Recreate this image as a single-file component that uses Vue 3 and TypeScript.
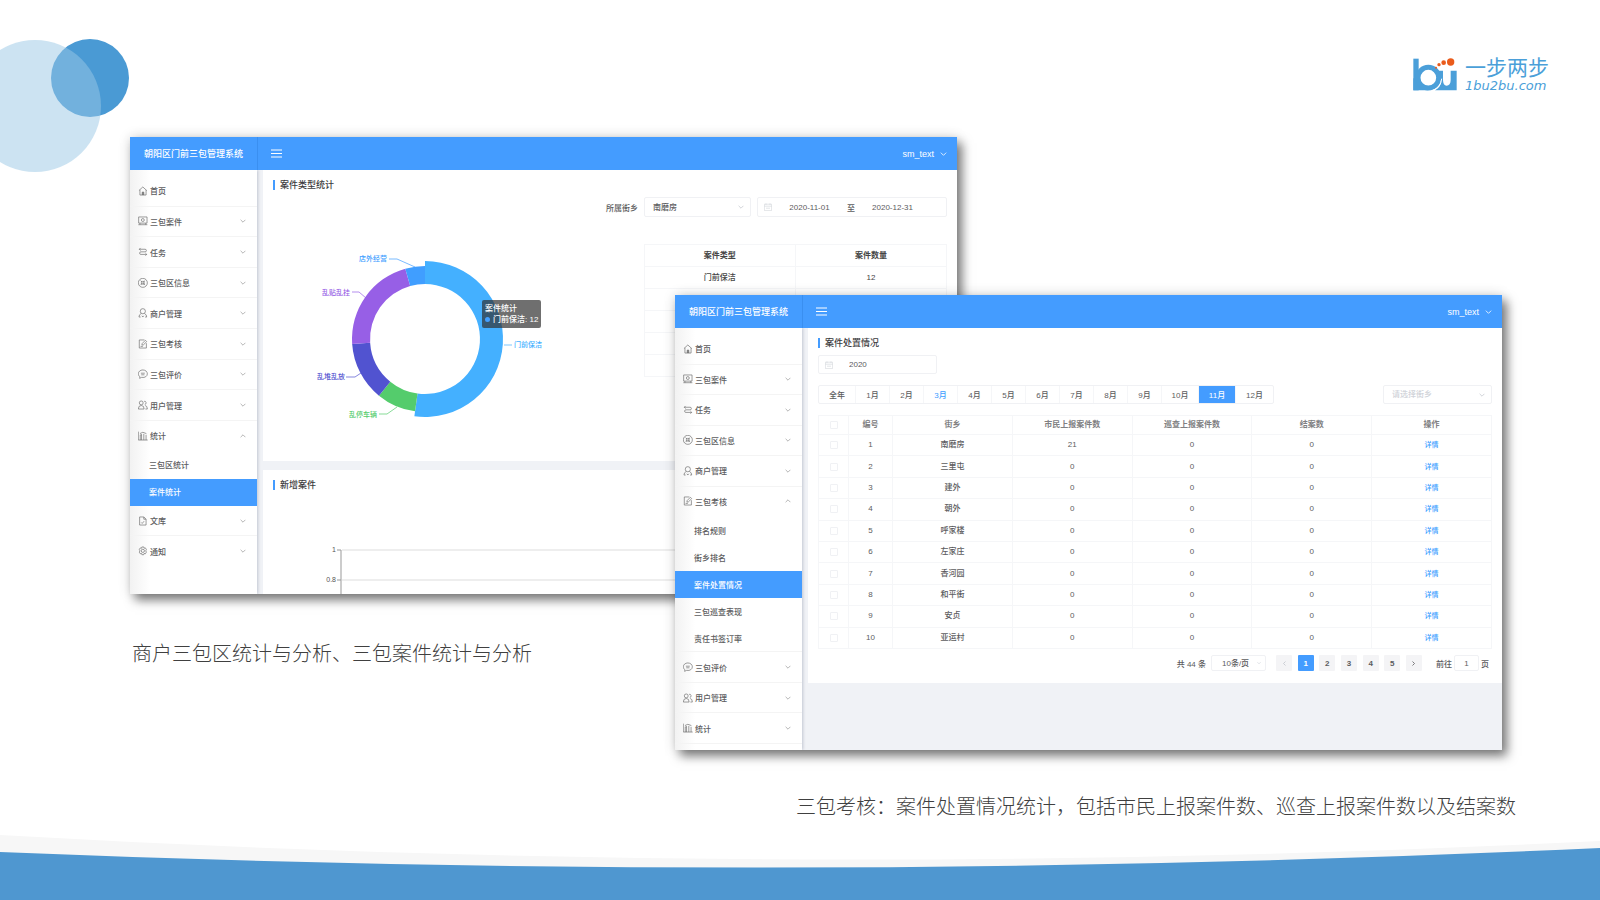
<script setup lang="ts">
import { ref } from 'vue'

interface MenuEntry {
  label: string
  icon: string
  leaf?: boolean
  children?: string[]
}

interface Slice {
  name: string
  value: number
  color: string
  outer: number
  line: string
  tx: number
  ty: number
}

const icons: Record<string, string> = {
  home: 'M3 14 15 3 27 14M6 12V28H25V12M13 28V19H18V28M14 28V20H17V28',
  cases: 'M2 3H28V22H2ZM1 27H29M15 8A4.500 4.500 0 1 0 15 17A4.500 4.500 0 1 0 15 8M6 22V27M24 22V27',
  task: 'M8 3 4 7 8 11M4 7H22Q26 7 26 11T22 15H9Q5 15 5 19T9 23H27M23 19 27 23 23 27',
  area: 'M15 1A14 14 0 1 0 15 29A14 14 0 1 0 15 1M8 8 13 13M22 8 17 13M8 22 13 17M22 22 17 17M9 13H13V9M21 13H17V9M9 17H13V21M21 17H17V21',
  merchant: 'M15 2A8 8 0 1 0 15 18A8 8 0 1 0 15 2M10 17Q3 20 3 28H8M20 17Q27 20 27 28H22M12 24 15 28 18 24',
  exam: 'M20 3H4V28H26V13M12 19 13 14 23 4 27 8 17 18ZM8 23H15',
  comment: 'M15 3C7 3 1 8 1 15C1 19 3 22 6 24L5 29L11 26C22 28 29 22 29 15C29 8 23 3 15 3M9 13H21M10 18H20',
  users: 'M10 3A6 6 0 1 0 10 15A6 6 0 1 0 10 3M1 28Q1 17 10 17Q19 17 19 28ZM19 4A5 5 0 1 1 21 14M22 17Q29 18 29 28H23',
  stats: 'M1 2V28H30M7 28V12H11M11 28V10M18 28V9M25 28V12M6 8 15 4 26 8',
  library: 'M18 3H5V28H25V10ZM18 3V10H25M10 20 13 23 19 16',
  notice: 'M12 3H18L19 7L23 6L26 11L24 15L26 19L23 24L19 23L18 27H12L11 23L7 24L4 19L6 15L4 11L7 6L11 7ZM15 10A5 5 0 1 0 15 20A5 5 0 1 0 15 10',
}

const firstMenu: MenuEntry[] = [
  { label: '首页', icon: 'home', leaf: true },
  { label: '三包案件', icon: 'cases' },
  { label: '任务', icon: 'task' },
  { label: '三包区信息', icon: 'area' },
  { label: '商户管理', icon: 'merchant' },
  { label: '三包考核', icon: 'exam' },
  { label: '三包评价', icon: 'comment' },
  { label: '用户管理', icon: 'users' },
  { label: '统计', icon: 'stats', children: ['三包区统计', '案件统计'] },
  { label: '文库', icon: 'library' },
  { label: '通知', icon: 'notice' },
]

const secondMenu: MenuEntry[] = [
  { label: '首页', icon: 'home', leaf: true },
  { label: '三包案件', icon: 'cases' },
  { label: '任务', icon: 'task' },
  { label: '三包区信息', icon: 'area' },
  { label: '商户管理', icon: 'merchant' },
  {
    label: '三包考核',
    icon: 'exam',
    children: ['排名规则', '街乡排名', '案件处置情况', '三包巡查表现', '责任书签订率'],
  },
  { label: '三包评价', icon: 'comment' },
  { label: '用户管理', icon: 'users' },
  { label: '统计', icon: 'stats' },
]

const windows = [
  { key: 'first', menu: firstMenu, active: '案件统计' },
  { key: 'second', menu: secondMenu, active: '案件处置情况' },
]

const slices: Slice[] = [
  { name: '门前保洁', value: 12, color: '#44b0ff', outer: 78, line: '204,115 212,115', tx: 214, ty: 117 },
  { name: '乱停车辆', value: 2, color: '#54cc6c', outer: 73, line: '79,184 87,184 97,177', tx: 49, ty: 187 },
  { name: '乱堆乱放', value: 3, color: '#5153d0', outer: 73, line: '46,147 55,147 61,143', tx: 17, ty: 149 },
  { name: '乱贴乱挂', value: 5, color: '#975fe6', outer: 73, line: '52,62 59,62 66,68', tx: 22, ty: 65 },
  { name: '店外经营', value: 1, color: '#409eff', outer: 73, line: '89,29 97,29 115,37', tx: 59, ty: 31 },
]

const total = slices.reduce((sum, s) => sum + s.value, 0)
const cx = 125
const cy = 109
const inner = 55

function point(radius: number, fraction: number): string {
  const angle = fraction * Math.PI * 2
  return `${(cx + radius * Math.sin(angle)).toFixed(2)} ${(cy - radius * Math.cos(angle)).toFixed(2)}`
}

let passed = 0
const arcs = slices.map((s) => {
  const from = passed / total
  passed += s.value
  const to = passed / total
  const large = to - from > 0.5 ? 1 : 0
  return {
    ...s,
    d: `M${point(s.outer, from)}A${s.outer} ${s.outer} 0 ${large} 1 ${point(s.outer, to)}L${point(inner, to)}A${inner} ${inner} 0 ${large} 0 ${point(inner, from)}Z`,
  }
})

const months = ['全年', '1月', '2月', '3月', '4月', '5月', '6月', '7月', '8月', '9月', '10月', '11月', '12月']
const month = ref('11月')

const rows = [
  { name: '南磨房', reported: 21 },
  { name: '三里屯', reported: 0 },
  { name: '建外', reported: 0 },
  { name: '朝外', reported: 0 },
  { name: '呼家楼', reported: 0 },
  { name: '左家庄', reported: 0 },
  { name: '香河园', reported: 0 },
  { name: '和平街', reported: 0 },
  { name: '安贞', reported: 0 },
  { name: '亚运村', reported: 0 },
]

const page = ref(1)
</script>

<template>
  <main class="slide">
    <svg class="circles" viewBox="0 0 140 180" aria-hidden="true">
      <circle cx="90" cy="78" r="39" fill="#4a9ad4" />
      <circle cx="35" cy="106" r="66" fill="#99c7e5" fill-opacity="0.5" />
    </svg>
    <svg class="wave" viewBox="0 0 1600 80" preserveAspectRatio="none" aria-hidden="true">
      <path d="M0 15Q800 61 1600 21V80H0Z" fill="#f7f7f7" />
      <path d="M0 32Q800 65 1600 28V80H0Z" fill="#4f97d0" />
    </svg>

    <header class="brand">
      <svg class="brand-mark" viewBox="0 0 132 99" aria-hidden="true">
        <g fill="#4b9fd9">
          <path d="M1 2H17V97H1Z" />
          <path d="M1 60V97H46Z" />
          <path d="M76 38H90V64C90 77 94 83 101 83C108 83 113 77 113 66V38H131V97H66C78 91 84 82 84 70Z" />
        </g>
        <circle cx="46" cy="59" r="31" stroke="#4b9fd9" stroke-width="15" fill="#fff" />
        <path d="M60 97Q84 88 86 62" stroke="#fff" stroke-width="3" fill="none" />
        <g fill="#ea5b1b">
          <circle cx="69" cy="29" r="3" />
          <circle cx="78" cy="20" r="5" />
          <circle cx="92" cy="14" r="7" />
          <circle cx="113" cy="12" r="11" />
        </g>
      </svg>
      <div class="brand-words">
        <span class="brand-name">一步两步</span>
        <span class="brand-site">1bu2bu.com</span>
      </div>
    </header>

    <section v-for="win in windows" :key="win.key" class="window" :class="win.key">
      <header class="topbar">
        <h2 class="system">朝阳区门前三包管理系统</h2>
        <button class="burger" type="button" aria-label="折叠菜单">
          <svg viewBox="0 0 11 9"><path d="M0 1H11M0 4.500H11M0 8H11" /></svg>
        </button>
        <button class="user" type="button">
          <span>sm_text</span>
          <svg class="chevron" viewBox="0 0 10 6"><path d="M1 1 5 5 9 1" /></svg>
        </button>
      </header>

      <div class="body">
        <aside class="side">
          <nav class="menu">
            <template v-for="item in win.menu" :key="item.label">
              <button class="item" type="button" :class="{ open: item.children }">
                <svg class="icon" viewBox="0 0 31 31"><path :d="icons[item.icon]" /></svg>
                <span>{{ item.label }}</span>
                <svg v-if="!item.leaf" class="chevron" :class="{ up: item.children }" viewBox="0 0 10 6">
                  <path d="M1 1 5 5 9 1" />
                </svg>
              </button>
              <a
                v-for="(sub, i) in item.children"
                :key="sub"
                class="sub"
                :class="{ active: sub === win.active, last: i === item.children!.length - 1 }"
                href="#"
              >{{ sub }}</a>
            </template>
          </nav>
        </aside>

        <div v-if="win.key === 'first'" class="content">
          <section class="card stats-card">
            <h3 class="heading">案件类型统计</h3>
            <form class="filters">
              <label for="street">所属街乡</label>
              <span class="select-box street">
                <select id="street"><option>南磨房</option></select>
                <svg class="chevron" viewBox="0 0 10 6"><path d="M1 1 5 5 9 1" /></svg>
              </span>
              <span class="range">
                <svg class="calendar" viewBox="0 0 20 20"><path d="M1 3H19V19H1ZM1 8H19M5 1V5M15 1V5M5 13H15" /></svg>
                <input type="text" value="2020-11-01" aria-label="开始日期" />
                <span>至</span>
                <input type="text" value="2020-12-31" aria-label="结束日期" />
              </span>
            </form>
            <div class="split">
              <div class="chart">
                <svg viewBox="0 0 260 210" role="img" aria-label="案件统计">
                  <path v-for="a in arcs" :key="a.name" :d="a.d" :fill="a.color" />
                  <g v-for="a in arcs" :key="a.name">
                    <polyline :points="a.line" :stroke="a.color" fill="none" stroke-width="0.7" />
                    <text :x="a.tx" :y="a.ty" :fill="a.color">{{ a.name }}</text>
                  </g>
                </svg>
                <div class="tooltip">
                  <span>案件统计</span>
                  <span><i class="dot"></i>门前保洁: 12</span>
                </div>
              </div>
              <table class="types">
                <thead>
                  <tr><th>案件类型</th><th>案件数量</th></tr>
                </thead>
                <tbody>
                  <tr><td>门前保洁</td><td>12</td></tr>
                  <tr v-for="n in 4" :key="n"><td></td><td></td></tr>
                </tbody>
              </table>
            </div>
          </section>
          <section class="card grow">
            <h3 class="heading">新增案件</h3>
            <svg class="axis" role="img" aria-label="新增案件">
              <path d="M68 60V110M64 60H68M64 90H68" stroke="#999" />
              <line x1="69" y1="60" x2="100%" y2="60" stroke="#ddd" />
              <line x1="69" y1="90" x2="100%" y2="90" stroke="#ddd" />
              <text x="63" y="62" text-anchor="end">1</text>
              <text x="63" y="92" text-anchor="end">0.8</text>
            </svg>
          </section>
        </div>

        <div v-else class="content">
          <section class="card disposal-card">
            <h3 class="heading">案件处置情况</h3>
            <span class="year">
              <svg class="calendar" viewBox="0 0 20 20"><path d="M1 3H19V19H1ZM1 8H19M5 1V5M15 1V5M5 13H15" /></svg>
              <input type="text" value="2020" aria-label="年份" />
            </span>
            <div class="toolbar">
              <div class="months">
                <button
                  v-for="m in months"
                  :key="m"
                  type="button"
                  :class="{ wide: m.length === 3 || m === '全年', on: m === month, hover: m === '3月' }"
                  @click="month = m"
                >{{ m }}</button>
              </div>
              <span class="select-box pick">
                <select aria-label="请选择街乡"><option>请选择街乡</option></select>
                <svg class="chevron" viewBox="0 0 10 6"><path d="M1 1 5 5 9 1" /></svg>
              </span>
            </div>
            <table class="cases">
              <colgroup><col class="c-check" /><col class="c-no" /><col span="5" /></colgroup>
              <thead>
                <tr>
                  <th><input type="checkbox" aria-label="全选" /></th>
                  <th>编号</th><th>街乡</th><th>市民上报案件数</th><th>巡查上报案件数</th><th>结案数</th><th>操作</th>
                </tr>
              </thead>
              <tbody>
                <tr v-for="(row, i) in rows" :key="row.name">
                  <td><input type="checkbox" :aria-label="row.name" /></td>
                  <td>{{ i + 1 }}</td>
                  <td>{{ row.name }}</td>
                  <td>{{ row.reported }}</td>
                  <td>0</td>
                  <td>0</td>
                  <td><a href="#">详情</a></td>
                </tr>
              </tbody>
            </table>
            <div class="pagination">
              <span>共 44 条</span>
              <span class="select-box size">
                <select aria-label="每页条数"><option>10条/页</option></select>
                <svg class="chevron" viewBox="0 0 10 6"><path d="M1 1 5 5 9 1" /></svg>
              </span>
              <div class="pages">
                <button type="button" aria-label="上一页" disabled>
                  <svg class="arrow" viewBox="0 0 6 10"><path d="M5 1 1 5 5 9" /></svg>
                </button>
                <button v-for="n in 5" :key="n" type="button" :class="{ on: n === page }" @click="page = n">{{ n }}</button>
                <button type="button" aria-label="下一页">
                  <svg class="arrow" viewBox="0 0 6 10"><path d="M1 1 5 5 1 9" /></svg>
                </button>
              </div>
              <label for="goto">前往</label>
              <input id="goto" class="goto" type="text" value="1" />
              <span>页</span>
            </div>
          </section>
        </div>
      </div>
    </section>

    <p class="caption one">商户三包区统计与分析、三包案件统计与分析</p>
    <p class="caption two">三包考核：案件处置情况统计，包括市民上报案件数、巡查上报案件数以及结案数</p>
  </main>
</template>

<style>
body {
  margin: 0;
  background: #fff;
}
</style>

<style scoped>
.slide,
.slide * {
  box-sizing: border-box;
}

.slide {
  position: relative;
  display: grid;
  grid-template-columns: 130fr 545fr 282fr 545fr 98fr;
  grid-template-rows: 137px 158px 299px 156px 1fr;
  min-height: 100vh;
  overflow: hidden;
  background: #fff;
  color: #5c5c5e;
  font-family: "Liberation Sans", "Noto Sans CJK SC", sans-serif;
  font-size: 8px;
  font-weight: 500;
}

button,
input,
select {
  margin: 0;
  padding: 0;
  border: 0;
  background: none;
  color: inherit;
  font: inherit;
  outline: none;
}

h2,
h3,
p {
  margin: 0;
}

a {
  text-decoration: none;
}

svg {
  display: block;
}

.circles {
  position: absolute;
  top: 0;
  left: 0;
  width: 140px;
  height: 180px;
}

.wave {
  position: absolute;
  bottom: 0;
  left: 0;
  width: 100%;
  height: 80px;
}

.brand {
  grid-column: 4 / 6;
  grid-row: 1;
  justify-self: end;
  align-self: start;
  display: flex;
  gap: 8px;
  margin: 58px 51px 0 0;
  color: #4b9fd9;
}

.brand-mark {
  width: 44px;
  height: 33px;
}

.brand-words {
  display: flex;
  flex-direction: column;
  white-space: nowrap;
}

.brand-name {
  font-size: 21px;
  font-weight: 400;
  line-height: 20px;
}

.brand-site {
  font-family: "DejaVu Sans", sans-serif;
  font-size: 13px;
  font-style: italic;
  font-weight: 400;
  line-height: 16px;
}

.window {
  position: relative;
  display: flex;
  flex-direction: column;
  min-width: 0;
  background: #f0f2f6;
  box-shadow: 5px 6px 10px rgba(0, 0, 0, 0.5), 0 0 12px rgba(0, 0, 0, 0.14);
}

.first {
  grid-column: 2 / 4;
  grid-row: 2 / 4;
}

.second {
  grid-column: 3 / 5;
  grid-row: 3 / 5;
}

.topbar {
  display: flex;
  align-items: center;
  flex: none;
  height: 33px;
  padding-right: 10px;
  background: #449cff;
  color: #fff;
}

.system {
  align-self: stretch;
  width: 128px;
  border-right: 1px solid #3a8ff0;
  font-size: 9px;
  font-weight: 500;
  line-height: 34px;
  text-align: center;
}

.burger {
  margin-left: 13px;
}

.burger svg {
  width: 11px;
  height: 9px;
  fill: none;
  stroke: #fff;
  stroke-width: 1;
}

.user {
  display: flex;
  align-items: center;
  gap: 6px;
  margin-left: auto;
  font-size: 9px;
}

.chevron {
  flex: none;
  width: 6px;
  height: 4px;
  fill: none;
  stroke: currentColor;
  stroke-width: 1.2;
}

.user .chevron {
  width: 7px;
}

.chevron.up {
  transform: rotate(180deg);
}

.body {
  display: flex;
  flex: 1;
  min-height: 0;
  overflow: hidden;
}

.side {
  flex: none;
  width: 127px;
  padding-top: 6px;
  background: linear-gradient(to right, #f2f2f2, #fff 20px);
  box-shadow: 1px 0 3px rgba(0, 20, 60, 0.2);
}

.menu {
  display: flex;
  flex-direction: column;
}

.first .menu {
  height: 391px;
}

.second .menu {
  height: 410px;
}

.item,
.sub {
  display: flex;
  align-items: center;
  min-height: 0;
  border-bottom: 1px solid #f4f4f4;
}

.item {
  flex: 34 0 0;
  gap: 2px;
  padding: 0 11px 0 8px;
  color: #5c5c5e;
  text-align: left;
}

.item.open {
  border-bottom-color: transparent;
}

.item:last-child {
  border-bottom-color: transparent;
}

.second .item:last-child {
  border-bottom-color: #f4f4f4;
}

.item .chevron {
  margin-left: auto;
  color: #999;
}

.icon {
  width: 10px;
  height: 10px;
  fill: none;
  stroke: #666;
  stroke-width: 2;
}

.sub {
  flex: 30 0 0;
  padding-left: 19px;
  border-bottom-color: transparent;
  color: #5c5c5e;
}

.sub.last {
  border-bottom-color: #f4f4f4;
}

.sub.active {
  border-bottom-color: #449cff;
  background: #449cff;
  color: #fff;
}

.content {
  display: flex;
  flex: 1;
  flex-direction: column;
  gap: 9px;
  min-width: 0;
  padding-left: 6px;
}

.card {
  display: flex;
  flex-direction: column;
  padding: 10px 10px 0;
  background: #fff;
}

.stats-card {
  flex: none;
  height: 291px;
}

.grow {
  flex: 1;
  min-height: 0;
}

.heading {
  flex: none;
  align-self: flex-start;
  height: 10px;
  border-left: 2px solid #449cff;
  padding-left: 5px;
  color: #3c3c3e;
  font-size: 9px;
  font-weight: 500;
  line-height: 10px;
}

.filters {
  display: flex;
  align-items: center;
  justify-content: flex-end;
  height: 20px;
  margin-top: 7px;
}

.select-box {
  display: flex;
  align-items: center;
  border: 1px solid #f0f1f4;
  border-radius: 2px;
  padding-right: 6px;
  background: #fff;
}

.select-box select {
  flex: 1;
  min-width: 0;
  height: 100%;
  padding-left: 8px;
  appearance: none;
}

.select-box .chevron {
  color: #c0c4cc;
}

.street {
  width: 107px;
  height: 20px;
  margin: 0 6px 0 6px;
}

.range,
.year {
  display: flex;
  align-items: center;
  border: 1px solid #f0f1f4;
  border-radius: 2px;
  padding-left: 6px;
}

.range {
  width: 190px;
  height: 20px;
}

.range input {
  width: 75px;
  min-width: 0;
  text-align: center;
}

.calendar {
  flex: none;
  width: 8px;
  height: 8px;
  fill: none;
  stroke: #d0d3d9;
  stroke-width: 1.5;
}

.split {
  display: flex;
  justify-content: space-between;
}

.chart {
  position: relative;
  flex: none;
  margin: 13px 0 0 27px;
}

.chart svg {
  width: 260px;
  height: 210px;
  font-size: 7px;
}

.tooltip {
  position: absolute;
  top: 70px;
  left: 182px;
  display: flex;
  flex-direction: column;
  border-radius: 2px;
  padding: 3px;
  background: rgba(50, 50, 50, 0.7);
  color: #fff;
  line-height: 11px;
  white-space: nowrap;
}

.dot {
  display: inline-block;
  width: 5px;
  height: 5px;
  margin-right: 3px;
  border-radius: 50%;
  background: #44a0ff;
}

table {
  border-collapse: collapse;
  table-layout: fixed;
  text-align: center;
}

th,
td {
  overflow: hidden;
  border: 1px solid #f5f6f8;
  padding: 0;
  line-height: 12px;
}

.types {
  align-self: flex-start;
  width: 45%;
  margin-top: 27px;
  color: #444;
}

.types th,
.types td {
  height: 22px;
}

.types th {
  font-weight: 700;
}

.axis {
  flex: none;
  width: 100%;
  height: 110px;
  font-size: 7px;
  fill: #555;
}

.disposal-card {
  padding-bottom: 12px;
}

.year {
  width: 119px;
  height: 19px;
  margin-top: 7px;
}

.year input {
  width: 80px;
  padding-left: 16px;
}

.toolbar {
  display: flex;
  justify-content: space-between;
  margin-top: 11px;
}

.months {
  display: flex;
  height: 19px;
  border: 1px solid #f0f1f4;
  border-radius: 2px;
}

.months button {
  width: 34px;
  border-right: 1px solid #f5f6f8;
}

.months button.wide {
  width: 37px;
}

.months button:last-child {
  border-right: 0;
}

.months .hover {
  color: #409eff;
}

.months .on {
  background: #449cff;
  color: #fff;
}

.pick {
  width: 109px;
  height: 19px;
  color: #d0d3d9;
}

.cases {
  width: 100%;
  height: 234px;
  margin-top: 11px;
}

.c-check {
  width: 30px;
}

.c-no {
  width: 44px;
}

.cases thead tr {
  height: 19px;
}

.cases th {
  color: #808082;
  font-weight: 700;
}

.cases a {
  color: #409eff;
  font-size: 7px;
}

.cases input {
  display: block;
  width: 8px;
  height: 8px;
  margin: 0 auto;
  border: 1px solid #f0f1f4;
  border-radius: 1px;
  appearance: none;
}

.pagination {
  display: flex;
  align-items: center;
  justify-content: flex-end;
  height: 16px;
  margin-top: 6px;
  padding-right: 3px;
}

.size {
  width: 55px;
  height: 16px;
  margin: 0 10px 0 5px;
  padding-right: 4px;
}

.size select {
  padding-left: 10px;
}

.size .chevron {
  width: 4px;
}

.pages {
  display: flex;
  justify-content: space-between;
  width: 146px;
  height: 16px;
  margin-right: 14px;
}

.pages button {
  display: flex;
  align-items: center;
  justify-content: center;
  width: 16px;
  border-radius: 1px;
  background: #f4f4f6;
  font-weight: 700;
}

.pages .on {
  background: #449cff;
  color: #fff;
}

.arrow {
  width: 3px;
  height: 5px;
  fill: none;
  stroke: currentColor;
  stroke-width: 1.6;
}

.pages button:disabled {
  color: #c0c4cc;
}

.goto {
  width: 25px;
  height: 16px;
  margin: 0 2px;
  border: 1px solid #f0f1f4;
  border-radius: 2px;
  text-align: center;
}

.caption {
  z-index: 1;
  color: #404040;
  font-family: "Noto Sans CJK SC", sans-serif;
  font-size: 20px;
  font-weight: 300;
  line-height: 30px;
  white-space: nowrap;
}

.one {
  grid-column: 2 / 3;
  grid-row: 4;
  margin: 44px 0 0 2px;
}

.two {
  grid-column: 3 / 6;
  grid-row: 5;
  justify-self: end;
  margin: 41px 84px 0 0;
}
</style>
